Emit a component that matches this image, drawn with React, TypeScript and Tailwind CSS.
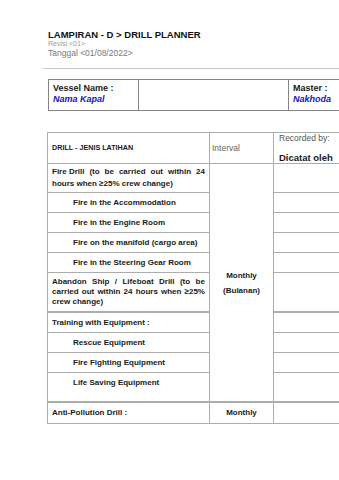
import React from "react";

const F = "font-['Liberation_Sans',Arial,sans-serif]";

function Cell({ children, className = "" }: { children?: React.ReactNode; className?: string }) {
  return <div className={"bg-white flex items-center " + className}>{children}</div>;
}

export default function App() {
  const body = "text-[8px] font-bold text-[#1a1a1a] leading-[10px]";
  return (
    <div className={"relative w-[339px] h-[480px] overflow-hidden bg-white " + F}>
      <div className="pt-[29px] flex flex-col">
        <div className="ml-[48px] text-[9.5px] leading-[11px] font-bold text-[#111] whitespace-nowrap">
          LAMPIRAN - D &gt; DRILL PLANNER
        </div>
        <div className="ml-[48px] text-[7px] leading-[8px] text-[#9a9a9a] whitespace-nowrap">Revisi &lt;01&gt;</div>
        <div className="ml-[48px] text-[8.5px] leading-[10px] text-[#7a7a7a] whitespace-nowrap">
          Tanggal &lt;01/08/2022&gt;
        </div>
        <div className="ml-[43px] mt-[10px] h-px w-[320px] bg-[#c4c4c4] shrink-0" />
        <div className="ml-[48px] mt-[10px] grid w-max grid-cols-[89px_149px_90px] grid-rows-[30px] gap-px bg-[#858585] p-px">
          <div className="bg-white pl-[4px] pt-[3px]">
            <div className="text-[9px] leading-[11px] font-bold text-[#1a1a1a] whitespace-nowrap">Vessel Name :</div>
            <div className="text-[9px] leading-[11px] font-bold italic text-[#1616b4] whitespace-nowrap">Nama Kapal</div>
          </div>
          <div className="bg-white" />
          <div className="bg-white pl-[4px] pt-[3px]">
            <div className="text-[9px] leading-[11px] font-bold text-[#1a1a1a] whitespace-nowrap">Master :</div>
            <div className="text-[9px] leading-[11px] font-bold italic text-[#1616b4] whitespace-nowrap">Nakhoda</div>
          </div>
        </div>
        <div className="ml-[47px] mt-[21px] grid w-max grid-cols-[161px_63px_80px] grid-rows-[30px_28px_19px_19px_19px_19px_39px_19px_19px_19px_29px_20px] gap-px bg-[#acacac] p-px">
          {/* header */}
          <Cell className="pl-[4px]">
            <span className="text-[7.2px] font-bold text-[#1a1a1a] whitespace-nowrap">DRILL - JENIS LATIHAN</span>
          </Cell>
          <Cell className="pl-[2px]">
            <span className="text-[8.5px] text-[#666] whitespace-nowrap">Interval</span>
          </Cell>
          <div className="bg-white flex flex-col justify-between pl-[5px] py-0">
            <span className="text-[8.5px] leading-[11px] text-[#555] whitespace-nowrap">Recorded by:</span>
            <span className="text-[9.5px] leading-[11px] font-bold text-[#1a1a1a] whitespace-nowrap">Dicatat oleh</span>
          </div>

          {/* fire drill */}
          <div className={"bg-white flex flex-col justify-center pl-[4px] pr-[4px] " + body}>
            <div className="leading-[12px] whitespace-nowrap flex justify-between">
              <span>Fire Drill</span><span>(to</span><span>be</span><span>carried</span><span>out</span><span>within</span><span>24</span>
            </div>
            <div className="leading-[12px] whitespace-nowrap">hours when ≥25% crew change)</div>
          </div>
          <div className="row-span-10 bg-white border-b border-[#acacac] flex flex-col items-center justify-center">
            <span className="text-[8px] leading-[15px] font-bold text-[#1a1a1a]">Monthly</span>
            <span className="text-[8px] leading-[15px] font-bold text-[#1a1a1a]">(Bulanan)</span>
          </div>
          <Cell />

          <Cell className={"pl-[25px] " + body}><span className="whitespace-nowrap">Fire in the Accommodation</span></Cell>
          <Cell />
          <Cell className={"pl-[25px] " + body}><span className="whitespace-nowrap">Fire in the Engine Room</span></Cell>
          <Cell />
          <Cell className={"pl-[25px] " + body}><span className="whitespace-nowrap">Fire on the manifold (cargo area)</span></Cell>
          <Cell />
          <Cell className={"pl-[25px] " + body}><span className="whitespace-nowrap">Fire in the Steering Gear Room</span></Cell>
          <Cell />

          {/* abandon ship */}
          <div className={"bg-white border-b border-[#acacac] flex flex-col justify-center pl-[4px] pr-[4px] " + body}>
            <div className="flex justify-between whitespace-nowrap">
              <span>Abandon</span><span>Ship</span><span>/</span><span>Lifeboat</span><span>Drill</span><span>(to</span><span>be</span>
            </div>
            <div className="flex justify-between whitespace-nowrap">
              <span>carried</span><span>out</span><span>within</span><span>24</span><span>hours</span><span>when</span><span>≥25%</span>
            </div>
            <div className="whitespace-nowrap">crew change)</div>
          </div>
          <div className="bg-white border-b border-[#acacac]" />

          <Cell className={"pl-[4px] " + body}><span className="whitespace-nowrap">Training with Equipment :</span></Cell>
          <Cell />
          <Cell className={"pl-[25px] " + body}><span className="whitespace-nowrap">Rescue Equipment</span></Cell>
          <Cell />
          <Cell className={"pl-[25px] " + body}><span className="whitespace-nowrap">Fire Fighting Equipment</span></Cell>
          <Cell />
          <div className={"bg-white border-b border-[#acacac] pl-[25px] pt-[4px] " + body}>
            <span className="whitespace-nowrap leading-[12px]">Life Saving Equipment</span>
          </div>
          <div className="bg-white border-b border-[#acacac]" />

          <Cell className={"pl-[4px] " + body}><span className="whitespace-nowrap">Anti-Pollution Drill :</span></Cell>
          <Cell className="justify-center">
            <span className="text-[8px] font-bold text-[#1a1a1a]">Monthly</span>
          </Cell>
          <Cell />
        </div>
      </div>
    </div>
  );
}
